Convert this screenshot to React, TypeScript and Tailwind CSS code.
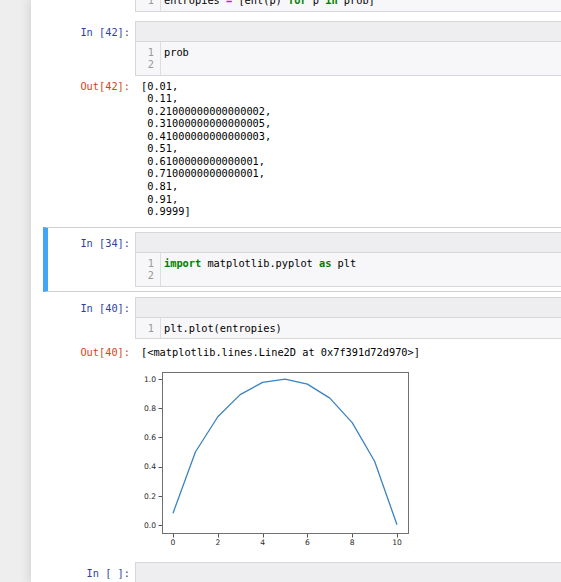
import type { ReactNode } from "react";
import clsx from "clsx";

const mono = "font-['DejaVu_Sans_Mono','Liberation_Mono',monospace] text-[10.3px]";

const entropies = [0.0808, 0.4999, 0.7415, 0.8932, 0.9765, 0.9997, 0.9648, 0.8687, 0.7015, 0.4365, 0.0015];

const probs = [
  "[0.01,",
  " 0.11,",
  " 0.21000000000000002,",
  " 0.31000000000000005,",
  " 0.41000000000000003,",
  " 0.51,",
  " 0.6100000000000001,",
  " 0.7100000000000001,",
  " 0.81,",
  " 0.91,",
  " 0.9999]",
];

function Kw({ children }: { children: ReactNode }) {
  return <span className="font-bold text-[#008000]">{children}</span>;
}

function CodeBox({ lines }: { lines: ReactNode[] }) {
  return (
    <div className="min-w-0 flex-1 border border-[#d7d7da] bg-[#f7f6f8]">
      <div className="h-[20px] border-b border-[#d7d7da] bg-[#eeeef0]" />
      <div className="flex leading-[12.5px]">
        <div className="w-[25px] shrink-0 border-r border-[#dedede] py-[4px] pr-[6px] text-right text-[#999]">
          {lines.map((_, i) => (
            <div key={i}>{i + 1}</div>
          ))}
        </div>
        <div className="py-[4px] pl-[3px] whitespace-pre text-black">
          {lines.map((line, i) => (
            <div key={i} className="h-[12.5px]">
              {line}
            </div>
          ))}
        </div>
      </div>
    </div>
  );
}

function Cell({
  n,
  selected,
  code,
  children,
}: {
  n: string;
  selected?: boolean;
  code: ReactNode[];
  children?: ReactNode;
}) {
  return (
    <div
      className={clsx(
        "border pt-[4px]",
        selected
          ? "border-[#cfcfcf] border-l-[5px] border-l-[#42A5F5] pb-[4px] pl-[1px]"
          : "border-transparent pb-[3px] pl-[5px]"
      )}
    >
      <div className="flex">
        <div className="w-[86px] shrink-0 whitespace-pre pt-[5px] pr-[5px] text-right leading-[12.5px] text-[#303F9F]">
          In [{n}]:
        </div>
        <CodeBox lines={code} />
      </div>
      {children}
    </div>
  );
}

function OutRow({ n, children, className }: { n?: string; children: ReactNode; className?: string }) {
  return (
    <div className={clsx("flex", className)}>
      <div className="w-[86px] shrink-0 pr-[5px] text-right leading-[12.56px] text-[#D84315]">
        {n ? `Out[${n}]:` : ""}
      </div>
      <div className="pl-[6px] whitespace-pre leading-[12.56px] text-black">{children}</div>
    </div>
  );
}

function Plot() {
  const left = 21;
  const top = 10;
  const w = 246;
  const h = 161;
  const yOf = (v: number) => 163 - v * 146;
  const xOf = (k: number) => 32 + k * 22.4;
  const pts = entropies.map((v, i) => `${xOf(i)},${yOf(v)}`).join(" ");

  return (
    <svg width="279" height="191" className="block font-['DejaVu_Sans',sans-serif]">
      <polyline points={pts} fill="none" stroke="#3a82c0" strokeWidth="1.3" strokeLinejoin="round" />
      <rect x={left + 0.5} y={top + 0.5} width={w} height={h} fill="none" stroke="#707070" strokeWidth="1" />
      {[0, 0.2, 0.4, 0.6, 0.8, 1.0].map((v) => (
        <g key={v}>
          <line x1={17.5} x2={left} y1={Math.round(yOf(v)) + 0.5} y2={Math.round(yOf(v)) + 0.5} stroke="#555" />
          <text x={15} y={yOf(v) + 2.7} textAnchor="end" fontSize="7.6" fill="#2a2a2a">
            {v.toFixed(1)}
          </text>
        </g>
      ))}
      {[0, 2, 4, 6, 8, 10].map((k) => (
        <g key={k}>
          <line x1={Math.round(xOf(k)) + 0.5} x2={Math.round(xOf(k)) + 0.5} y1={top + h + 1} y2={top + h + 4.5} stroke="#555" />
          <text x={xOf(k)} y={183} textAnchor="middle" fontSize="7.6" fill="#2a2a2a">
            {k}
          </text>
        </g>
      ))}
    </svg>
  );
}

export default function App() {
  return (
    <div className={clsx("flex h-[582px] w-full overflow-hidden bg-[#eeeeee]", mono)}>
      <div className="ml-[31px] w-[700px] shrink-0 bg-white pl-[12px] shadow-[0_0_10px_1px_rgba(87,87,87,0.2)]">
        <div className="-mt-[36px]">
          <Cell
            n="41"
            code={[
              <>
                entropies <span className="font-bold text-[#AA22FF]">=</span> [ent(p) <Kw>for</Kw> p <Kw>in</Kw> prob]
              </>,
            ]}
          />
          <Cell n="42" code={["prob", ""]}>
            <div className="mt-[4px] pb-[5px]">
              {probs.map((line, i) => (
                <OutRow key={i} n={i === 0 ? "42" : undefined}>
                  {line}
                </OutRow>
              ))}
            </div>
          </Cell>
          <Cell
            n="34"
            selected
            code={[
              <>
                <Kw>import</Kw> matplotlib.pyplot <Kw>as</Kw> plt
              </>,
              "",
            ]}
          />
          <Cell n="40" code={["plt.plot(entropies)"]}>
            <OutRow n="40" className="mt-[7px]">
              {"[<matplotlib.lines.Line2D at 0x7f391d72d970>]"}
            </OutRow>
            <OutRow className="mt-[3px]">
              <Plot />
            </OutRow>
          </Cell>
          <Cell n=" " code={[""]} />
        </div>
      </div>
    </div>
  );
}
